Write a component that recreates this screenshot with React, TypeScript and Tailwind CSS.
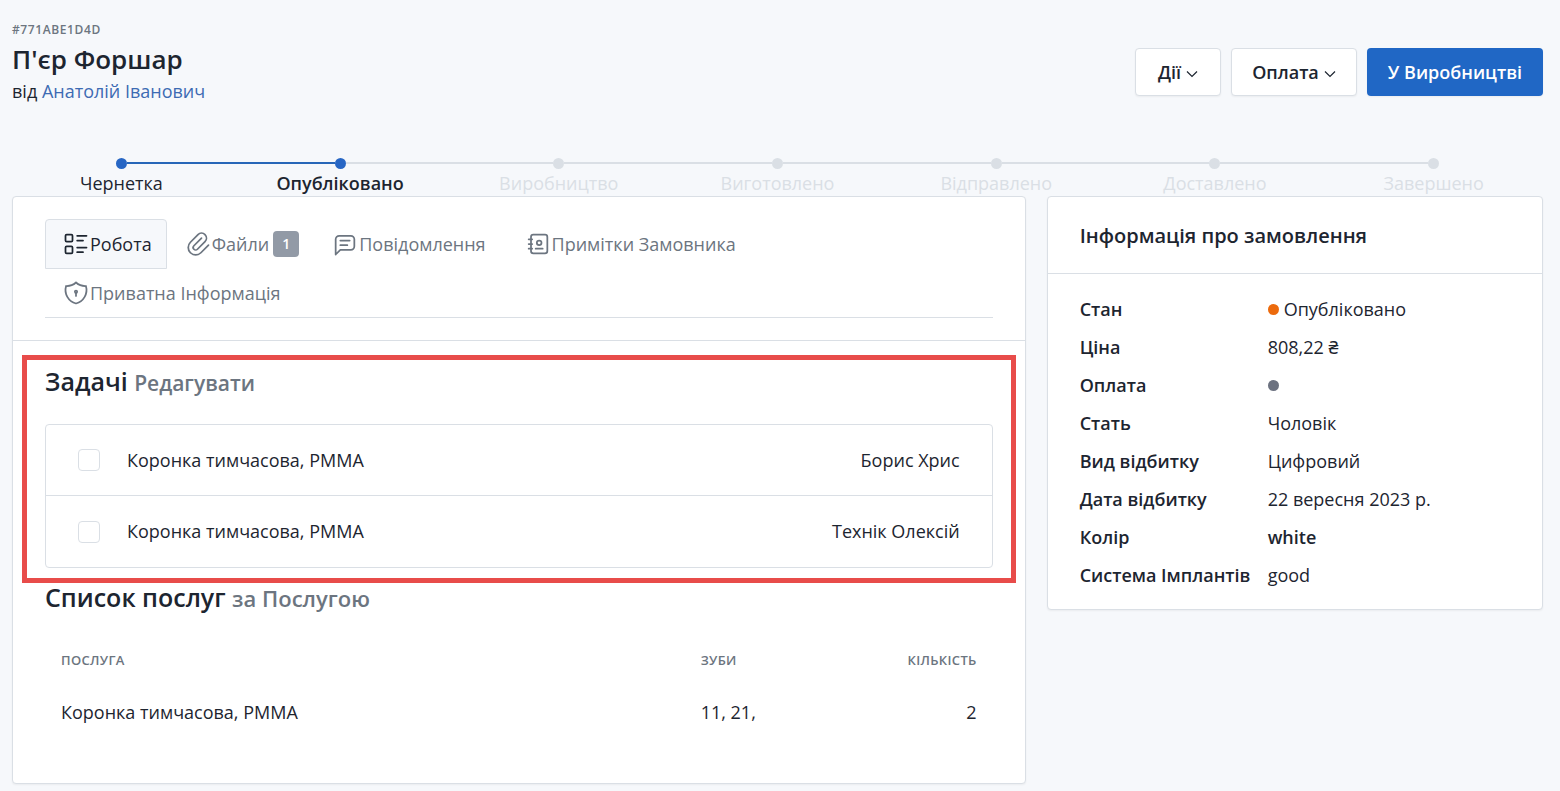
import React from "react";
import { TbListDetails, TbPaperclip, TbShieldLock, TbAddressBook } from "react-icons/tb";

interface Task {
  id: number;
  title: string;
  assignee: string;
}

interface Detail {
  label: string;
  value: string;
  dot?: string;
  strong?: boolean;
}

const steps = ["Чернетка", "Опубліковано", "Виробництво", "Виготовлено", "Відправлено", "Доставлено", "Завершено"];
const currentStep = 1;

const tasks: Task[] = [
  { id: 1, title: "Коронка тимчасова, PMMA", assignee: "Борис Хрис" },
  { id: 2, title: "Коронка тимчасова, PMMA", assignee: "Технік Олексій" },
];

const details: Detail[] = [
  { label: "Стан", value: "Опубліковано", dot: "bg-[#ec6a0c]" },
  { label: "Ціна", value: "808,22 ₴" },
  { label: "Оплата", value: "", dot: "bg-[#6c7280]" },
  { label: "Стать", value: "Чоловік" },
  { label: "Вид відбитку", value: "Цифровий" },
  { label: "Дата відбитку", value: "22 вересня 2023 р." },
  { label: "Колір", value: "white", strong: true },
  { label: "Система Імплантів", value: "good" },
];

function MessageIcon() {
  return (
    <svg
      className="w-7 h-7 shrink-0"
      viewBox="0 0 24 24"
      fill="none"
      stroke="currentColor"
      strokeWidth="1.5"
      strokeLinecap="round"
      strokeLinejoin="round"
    >
      <path d="M4 21v-13a3 3 0 0 1 3 -3h10a3 3 0 0 1 3 3v6a3 3 0 0 1 -3 3h-9l-4 4" />
      <path d="M8 9h8M8 13h6" />
    </svg>
  );
}

function Chevron() {
  return (
    <svg className="w-3 h-3 mt-1" viewBox="0 0 12 12" fill="none" stroke="currentColor" strokeWidth="1.2">
      <path d="M1 3.5l5 5l5 -5" />
    </svg>
  );
}

function Header() {
  return (
    <header className="flex items-center justify-between">
      <div>
        <div className="text-xs leading-4 font-semibold tracking-wider text-[#6c7580]">#771ABE1D4D</div>
        <h1 className="mt-[3px] text-[26px] leading-9 font-semibold">П'єр Форшар</h1>
        <p className="leading-7">
          від <a href="#customer" className="text-[#3d6bb3]">Анатолій Іванович</a>
        </p>
      </div>
      <div className="mt-[17px] flex gap-[10px] font-semibold">
        <button className="h-12 px-[22px] flex items-center gap-[5px] bg-white border border-[#dadfe5] rounded shadow-xs">
          Дії <Chevron />
        </button>
        <button className="h-12 px-5 flex items-center gap-[5px] bg-white border border-[#dadfe5] rounded shadow-xs">
          Оплата <Chevron />
        </button>
        <button className="h-12 px-[21px] bg-[#2067c5] text-white rounded shadow-xs">У Виробництві</button>
      </div>
    </header>
  );
}

function Steps() {
  return (
    <ol className="grid grid-cols-7 mt-[50px]">
      {steps.map((step, idx) => (
        <li
          key={step}
          className={`text-center leading-[25px] ${idx > currentStep ? "text-[#dadfe5]" : ""} ${idx === currentStep ? "font-semibold" : ""}`}
        >
          <div className="flex items-center h-4">
            <span className={`flex-1 h-[2px] ${idx === 0 ? "" : idx <= currentStep ? "bg-[#2766b8]" : "bg-[#dadfe5]"}`} />
            <span className={`w-[11px] h-[11px] rounded-full ${idx <= currentStep ? "bg-[#2766c4]" : "bg-[#dadfe5]"}`} />
            <span className={`flex-1 h-[2px] ${idx === steps.length - 1 ? "" : idx < currentStep ? "bg-[#2766b8]" : "bg-[#dadfe5]"}`} />
          </div>
          {step}
        </li>
      ))}
    </ol>
  );
}

function Tabs() {
  const tab = "flex items-center h-[50px] -mb-px pl-4 pr-[14px] border border-transparent";

  return (
    <nav className="px-8 py-[22px] border-b border-[#dadfe5]">
      <div className="flex flex-wrap border-b border-[#dadfe5] text-[#6c7580]">
        <button className="flex items-center h-[50px] -mb-px pl-4 pr-[14px] border border-[#dadfe5] rounded-t bg-[#f6f8fb] text-[#1d2530]">
          <TbListDetails className="w-7 h-7 shrink-0" strokeWidth={1.5} />
          Робота
        </button>
        <button className={tab}>
          <TbPaperclip className="w-7 h-7 shrink-0" strokeWidth={1.5} />
          Файли
          <span className="ml-1 w-[26px] h-[26px] rounded bg-[#929aa6] text-white text-sm leading-[26px] font-semibold">1</span>
        </button>
        <button className={tab}>
          <MessageIcon />
          Повідомлення
        </button>
        <button className={`${tab} ml-1.5`}>
          <TbAddressBook className="w-7 h-7 shrink-0" strokeWidth={1.5} />
          Примітки Замовника
        </button>
        <button className={tab}>
          <TbShieldLock className="w-7 h-7 shrink-0" strokeWidth={1.5} />
          Приватна Інформація
        </button>
      </div>
    </nav>
  );
}

function TaskSection() {
  return (
    <section className="relative px-8 pt-[22px] pb-[15px]">
      <div className="absolute inset-x-[9px] top-[14px] bottom-0 border-5 border-[#e84c4a] pointer-events-none" />
      <h2 className="text-[25px] leading-9 font-semibold">
        Задачі <a href="#edit" className="text-[21px] text-[#6c7580]">Редагувати</a>
      </h2>
      <ul className="mt-[23px] border border-[#dadfe5] rounded divide-y divide-[#dadfe5]">
        {tasks.map((task) => (
          <li key={task.id} className="flex items-center justify-between h-[71px] px-8">
            <label className="flex items-center gap-[27px]">
              <input type="checkbox" className="appearance-none w-[22px] h-[22px] bg-white border border-[#dadfe5] rounded" />
              {task.title}
            </label>
            <span>{task.assignee}</span>
          </li>
        ))}
      </ul>
    </section>
  );
}

function ServiceSection() {
  return (
    <section className="px-8 pb-[39px]">
      <h2 className="text-[25px] leading-7 font-semibold">
        Список послуг <span className="text-[22px] text-[#6c7580]">за Послугою</span>
      </h2>
      <table className="w-full mt-[29px]">
        <thead>
          <tr className="h-[39px] text-[13px] tracking-wide uppercase text-[#6c7580]">
            <th className="px-4 text-left font-semibold">Послуга</th>
            <th className="w-[160px] px-4 text-left font-semibold">Зуби</th>
            <th className="w-[148px] px-4 text-right font-semibold">Кількість</th>
          </tr>
        </thead>
        <tbody>
          <tr className="h-16">
            <td className="px-4">Коронка тимчасова, PMMA</td>
            <td className="px-4">11, 21,</td>
            <td className="px-4 text-right">2</td>
          </tr>
        </tbody>
      </table>
    </section>
  );
}

function OrderInfo() {
  return (
    <aside className="bg-white border border-[#dadfe5] rounded shadow-xs">
      <h3 className="px-8 pt-[25px] pb-[23px] text-xl leading-7 font-semibold border-b border-[#dadfe5]">
        Інформація про замовлення
      </h3>
      <dl className="px-8 pt-[21px] pb-[10px] grid grid-cols-[188px_1fr]">
        {details.map((item) => (
          <React.Fragment key={item.label}>
            <dt className="h-[38px] leading-7 font-semibold">{item.label}</dt>
            <dd className={`flex items-center gap-[5px] h-7 ${item.strong ? "font-semibold" : ""}`}>
              {item.dot && <span className={`w-[11px] h-[11px] rounded-full ${item.dot}`} />}
              {item.value}
            </dd>
          </React.Fragment>
        ))}
      </dl>
    </aside>
  );
}

export default function App() {
  return (
    <div className="min-h-screen pl-3 pr-[17px] pt-[22px] pb-1 bg-[#f6f8fb] text-[#1d2530] text-[18px] font-['Open_Sans','Noto_Sans',sans-serif]">
      <Header />
      <Steps />
      <main className="grid grid-cols-3 items-start gap-[21px]">
        <div className="col-span-2 bg-white border border-[#dadfe5] rounded shadow-xs">
          <Tabs />
          <TaskSection />
          <ServiceSection />
        </div>
        <OrderInfo />
      </main>
    </div>
  );
}
